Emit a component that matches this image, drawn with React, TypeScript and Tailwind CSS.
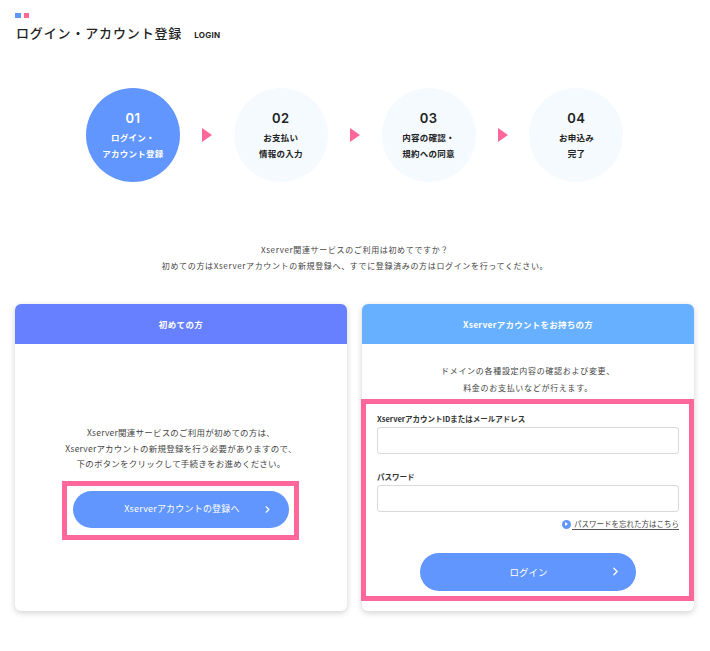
import React from 'react';
import { ChevronRight } from 'lucide-react';

const FONT = "font-['Noto_Sans_CJK_JP','Noto_Sans',sans-serif]";

const steps = [
  { no: '01', lines: ['ログイン・', 'アカウント登録'], active: true },
  { no: '02', lines: ['お支払い', '情報の入力'], active: false },
  { no: '03', lines: ['内容の確認・', '規約への同意'], active: false },
  { no: '04', lines: ['お申込み', '完了'], active: false },
];

const Step: React.FC<{ no: string; lines: string[]; active: boolean }> = ({ no, lines, active }) => (
  <div
    className={
      active
        ? 'w-[94px] h-[94px] pt-px rounded-full bg-[#6196ff] text-white flex flex-col items-center justify-center shrink-0'
        : 'w-[94px] h-[94px] pt-px rounded-full bg-[#f5faff] text-[#222222] flex flex-col items-center justify-center shrink-0'
    }
  >
    <div className="font-['Inter',sans-serif] text-[13px] leading-[16px] font-semibold tracking-[0.5px] mb-[4px]">{no}</div>
    {lines.map((line) => (
      <div key={line} className="text-[8.5px] leading-[15.5px] font-bold tracking-[0.25px] whitespace-nowrap">
        {line}
      </div>
    ))}
  </div>
);

const PillButton: React.FC<{ label: string; className: string; labelClass: string; chevronClass: string }> = ({
  label,
  className,
  labelClass,
  chevronClass,
}) => (
  <button className={className}>
    <span className={labelClass}>{label}</span>
    <ChevronRight className={chevronClass} strokeWidth={2.5} />
  </button>
);

const Field: React.FC<{ label: string; className?: string }> = ({ label, className }) => (
  <div className={className}>
    <div className="text-[7.5px] leading-[12px] font-bold text-[#333333] mb-[2px]">{label}</div>
    <div className="h-[27px] rounded-[3px] border border-[#d9d9d9] bg-white" />
  </div>
);

export default function App() {
  return (
    <div className={`${FONT} w-[710px] h-[651px] bg-white text-[#333333] overflow-hidden`}>
      <header className="pl-[15px] pt-[13px]">
        <div className="flex gap-[2px]">
          <span className="w-[6px] h-[5px] bg-[#6196ff]" />
          <span className="w-[5px] h-[5px] ml-[1px] bg-[#ff6699]" />
        </div>
        <div className="flex items-center mt-[5px] ml-px h-[20px]">
          <h1 className="text-[13px] leading-[20px] font-medium tracking-[0.85px] text-[#222222] whitespace-nowrap">
            ログイン・アカウント登録
          </h1>
          <span className="font-['Inter',sans-serif] text-[8px] font-bold tracking-[0.3px] text-[#222222] ml-[12px] mt-[4px]">
            LOGIN
          </span>
        </div>
      </header>

      <div className="flex items-center pl-[86px] mt-[45px]">
        {steps.map((step, i) => (
          <React.Fragment key={step.no}>
            <Step no={step.no} lines={step.lines} active={step.active} />
            {i < steps.length - 1 && (
              <div className="w-[53.8px] flex justify-center">
                <span className="w-0 h-0 border-y-[7.5px] border-y-transparent border-l-[10px] border-l-[#ff6699] ml-[1px]" />
              </div>
            )}
          </React.Fragment>
        ))}
      </div>

      <div className="mt-[60px] text-center text-[8px] leading-[16px] tracking-[0.65px] text-[#444444]">
        <p>Xserver関連サービスのご利用は初めてですか？</p>
        <p>初めての方はXserverアカウントの新規登録へ、すでに登録済みの方はログインを行ってください。</p>
      </div>

      <div className="flex gap-[15px] pl-[15px] mt-[30px]">
        <section className="w-[332px] h-[307px] rounded-[6px] bg-white shadow-[0_2px_6px_rgba(0,0,0,0.18)] flex flex-col">
          <div className="h-[40px] rounded-t-[6px] bg-[#6680ff] text-white flex items-center justify-center text-[8.5px] font-bold tracking-[0.4px]">
            初めての方
          </div>
          <div className="flex flex-col items-center pt-[81px]">
            <div className="text-center text-[8.5px] leading-[15.5px] tracking-[0.22px] text-[#444444]">
              <p>Xserver関連サービスのご利用が初めての方は、</p>
              <p>Xserverアカウントの新規登録を行う必要がありますので、</p>
              <p>下のボタンをクリックして手続きをお進めください。</p>
            </div>
            <div className="mt-[9px] -ml-px w-[237px] h-[59px] border-[5px] border-[#ff6699] pl-[6px] pt-[5px]">
              <PillButton
                label="Xserverアカウントの登録へ"
                className="relative w-[216px] h-[37px] rounded-full bg-[#6196ff] text-white flex items-center justify-center"
                labelClass="text-[9px] tracking-[0.2px] ml-[2px]"
                chevronClass="absolute right-[16px] top-[13px] w-[11px] h-[11px]"
              />
            </div>
          </div>
        </section>

        <section className="w-[332px] h-[307px] rounded-[6px] bg-white shadow-[0_2px_6px_rgba(0,0,0,0.18)] flex flex-col">
          <div className="h-[40px] rounded-t-[6px] bg-[#66b0ff] text-white flex items-center justify-center text-[8.5px] font-bold tracking-[0.25px]">
            Xserverアカウントをお持ちの方
          </div>
          <div className="pt-[19px] text-center text-[8px] leading-[16.5px] tracking-[0.7px] text-[#444444]">
            <p>ドメインの各種設定内容の確認および変更、</p>
            <p>料金のお支払いなどが行えます。</p>
          </div>
          <div className="-ml-px mt-[3px] w-[333px] h-[202px] border-[5px] border-[#ff6699] pt-[9px] pl-[11px] pr-[10px]">
            <Field label="XserverアカウントIDまたはメールアドレス" />
            <Field label="パスワード" className="mt-[17px]" />
            <div className="flex justify-end items-center mt-[5px] h-[14px] gap-[1px]">
              <span className="w-[9px] h-[9px] rounded-full bg-[#6196ff] flex items-center justify-center">
                <span className="w-0 h-0 border-y-[2px] border-y-transparent border-l-[3px] border-l-white" />
              </span>
              <a className="text-[7.5px] leading-[10px] text-[#444444] border-b border-[#555555] whitespace-nowrap pl-[2px]">
                パスワードを忘れた方はこちら
              </a>
            </div>
            <div className="flex justify-center mt-[22px]">
              <PillButton
                label="ログイン"
                className="relative w-[216px] h-[38px] rounded-full bg-[#6196ff] text-white flex items-center justify-center"
                labelClass="text-[9.5px] ml-[1px]"
                chevronClass="absolute right-[14px] top-[12px] w-[13px] h-[13px]"
              />
            </div>
          </div>
        </section>
      </div>
    </div>
  );
}
